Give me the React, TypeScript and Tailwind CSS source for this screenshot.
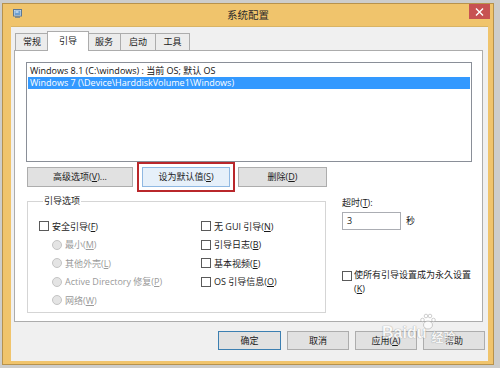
import React from "react";

const U = ({ children }: { children: React.ReactNode }) => (
  <span className="underline underline-offset-[1px]">{children}</span>
);

function Checkbox() {
  return <div className="w-[10px] h-[10px] border border-[#5a5a5a] bg-white shrink-0" />;
}

function Radio() {
  return <div className="w-[10px] h-[10px] rounded-full border border-[#c4c4c4] bg-[#e4e4e4] shrink-0" />;
}

function Tab({ children, className = "" }: { children: React.ReactNode; className?: string }) {
  return (
    <div
      className={`h-[17px] mb-[1px] border border-b-0 border-[#acacac] bg-[#ececec] flex items-center justify-center text-[9px] text-[#222] ${className}`}
    >
      {children}
    </div>
  );
}

function WindowIcon() {
  return (
    <svg width="9" height="9" viewBox="0 0 9 9">
      <rect x="0.5" y="0.5" width="8" height="6.5" fill="#dfe8f2" stroke="#5d7894" />
      <rect x="1.5" y="1.5" width="6" height="4.5" fill="#6d9fd0" />
      <rect x="2.5" y="2.5" width="3" height="1" fill="#fff" />
      <rect x="2" y="7.5" width="5" height="1.2" fill="#5d7894" />
    </svg>
  );
}

export default function App() {
  return (
    <div className="w-[500px] h-[368px] overflow-hidden bg-[#cdcdcb] pt-[3px] pl-[2px] font-['Open_Sans','Noto_Sans_CJK_SC',sans-serif] text-[9px] text-[#1a1a1a]">
      <div className="w-[492px] h-[362px] bg-[#f0c46c] border border-[#b7924c] flex flex-col">
        {/* title bar */}
        <div className="h-[22px] relative flex items-center justify-center shrink-0">
          <div className="absolute left-[10px] top-[5px]">
            <WindowIcon />
          </div>
          <span className="text-[10.5px] text-[#2b2b2b] font-['Noto_Sans_CJK_SC',sans-serif] -mt-[1px]">系统配置</span>
          <div className="absolute right-[3px] top-0 w-[21px] h-[15px] bg-[#c75252] flex items-center justify-center">
            <svg width="9" height="8" viewBox="0 0 9 8">
              <path d="M1 0.5 L8 7.5 M8 0.5 L1 7.5" stroke="#fff" strokeWidth="1.4" />
            </svg>
          </div>
        </div>

        {/* client area */}
        <div className="ml-[8px] mr-[5px] mb-[3px] h-[335px] bg-[#f0f0f0] border-t border-[#d9b464] flex flex-col relative">
          {/* tabs */}
          <div className="flex items-end h-[20px] mt-[4px] pl-[4px] -mb-[1px] relative z-10">
            <Tab className="w-[34px]">常规</Tab>
            <div className="-ml-[2px] w-[42px] h-[20px] border border-b-0 border-[#acacac] bg-white relative z-10 flex items-center justify-center text-[9px] text-[#222] pb-[2px]">
              引导
            </div>
            <Tab className="-ml-[2px] w-[34px]">服务</Tab>
            <Tab className="-ml-px w-[36px]">启动</Tab>
            <Tab className="-ml-px w-[35px]">工具</Tab>
          </div>

          {/* tab panel */}
          <div className="ml-[3px] w-[469px] h-[272px] border border-[#acacac] bg-white flex flex-col px-[11px] pt-[11px]">
            {/* list box */}
            <div className="w-[446px] h-[100px] border border-[#8a8f98] bg-white pt-[1px] px-[1px] shrink-0">
              <div className="h-[13px] leading-[13px] pl-[2px] whitespace-nowrap text-[#111]">
                Windows 8.1 (C:\windows) : 当前 OS; 默认 OS
              </div>
              <div className="h-[12px] leading-[12px] pl-[2px] whitespace-nowrap bg-[#3399ff] text-white">
                Windows 7 (\Device\HarddiskVolume1\Windows)
              </div>
            </div>

            {/* buttons row */}
            <div className="flex items-center h-[30px] shrink-0">
              <div className="ml-[1px] w-[106px] h-[20px] border border-[#adadad] bg-[#e1e1e1] flex items-center justify-center">
                高级选项(<U>V</U>)...
              </div>
              <div className="ml-[4px] w-[98px] h-[30px] border-2 border-[#b9272b] p-[3px]">
                <div className="w-full h-full border border-[#8fb8e2] bg-[#e6f0fa] flex items-center justify-center">
                  设为默认值(<U>S</U>)
                </div>
              </div>
              <div className="ml-[3px] w-[89px] h-[20px] border border-[#adadad] bg-[#e1e1e1] flex items-center justify-center">
                删除(<U>D</U>)
              </div>
            </div>

            {/* lower section */}
            <div className="flex mt-[3px]">
              <fieldset className="ml-[1px] w-[300px] h-[118px] border border-[#d5d5d5] px-[11px] pt-[10px]">
                <legend className="ml-[4px] px-[1px] leading-[12px] text-[#222]">引导选项</legend>
                <div className="flex">
                  <div className="w-[162px] flex flex-col">
                    <div className="h-[18.5px] flex items-center gap-[3px]">
                      <Checkbox />
                      <span>安全引导(<U>F</U>)</span>
                    </div>
                    <div className="h-[18.5px] flex items-center gap-[3px] pl-[13px] text-[#9a9a9a]">
                      <Radio />
                      <span>最小(<U>M</U>)</span>
                    </div>
                    <div className="h-[18.5px] flex items-center gap-[3px] pl-[13px] text-[#9a9a9a]">
                      <Radio />
                      <span>其他外壳(<U>L</U>)</span>
                    </div>
                    <div className="h-[18.5px] flex items-center gap-[3px] pl-[13px] text-[#9a9a9a] whitespace-nowrap">
                      <Radio />
                      <span>Active Directory 修复(<U>P</U>)</span>
                    </div>
                    <div className="h-[18.5px] flex items-center gap-[3px] pl-[13px] text-[#9a9a9a]">
                      <Radio />
                      <span>网络(<U>W</U>)</span>
                    </div>
                  </div>
                  <div className="flex flex-col">
                    <div className="h-[18.5px] flex items-center gap-[3px] whitespace-nowrap">
                      <Checkbox />
                      <span>无 GUI 引导(<U>N</U>)</span>
                    </div>
                    <div className="h-[18.5px] flex items-center gap-[3px]">
                      <Checkbox />
                      <span>引导日志(<U>B</U>)</span>
                    </div>
                    <div className="h-[18.5px] flex items-center gap-[3px]">
                      <Checkbox />
                      <span>基本视频(<U>E</U>)</span>
                    </div>
                    <div className="h-[18.5px] flex items-center gap-[3px] whitespace-nowrap">
                      <Checkbox />
                      <span>OS 引导信息(<U>O</U>)</span>
                    </div>
                  </div>
                </div>
              </fieldset>

              <div className="ml-[16px] flex flex-col pt-[2px]">
                <div className="leading-[12px]">超时(<U>T</U>):</div>
                <div className="flex items-center mt-[3px]">
                  <div className="w-[59px] h-[18px] border border-[#abadb3] bg-white pl-[4px] flex items-center">3</div>
                  <span className="ml-[5px]">秒</span>
                </div>
                <div className="flex items-start gap-[2px] mt-[40px]">
                  <div className="mt-[1px]">
                    <Checkbox />
                  </div>
                  <div className="leading-[14px] -mt-[2px] whitespace-nowrap">
                    使所有引导设置成为永久设置
                    <br />
                    (<U>K</U>)
                  </div>
                </div>
              </div>
            </div>
          </div>

          {/* bottom buttons */}
          <div className="flex justify-end gap-[6px] mt-[9px] pr-[3px]">
            <div className="w-[63px] h-[19px] border border-[#3c7fb1] bg-[#e1e1e1] flex items-center justify-center">确定</div>
            <div className="w-[62px] h-[19px] border border-[#adadad] bg-[#e1e1e1] flex items-center justify-center">取消</div>
            <div className="w-[62px] h-[19px] border border-[#adadad] bg-[#e1e1e1] flex items-center justify-center">
              应用(<U>A</U>)
            </div>
            <div className="w-[62px] h-[19px] border border-[#adadad] bg-[#e1e1e1] flex items-center justify-center">帮助</div>
          </div>

          {/* watermark */}
          <div className="absolute left-[371px] top-[286px] w-[95px] h-[32px] pointer-events-none opacity-70">
            <svg className="absolute left-[37px] top-0" width="18" height="17" viewBox="0 0 18 17">
              <g fill="#fff" stroke="#a8a8a8" strokeWidth="0.8">
                <ellipse cx="9" cy="12" rx="4.5" ry="4" />
                <circle cx="3.5" cy="7" r="1.8" />
                <circle cx="7" cy="3" r="1.8" />
                <circle cx="11" cy="3" r="1.8" />
                <circle cx="14.5" cy="7" r="1.8" />
              </g>
            </svg>
            <div className="absolute left-0 top-[12px] flex items-end text-white [text-shadow:0_0_1px_#888,0_0_1px_#888]">
              <span className="text-[16px] leading-[16px] font-bold font-['Liberation_Sans',sans-serif]">Baidu</span>
              <span className="text-[12px] leading-[14px] font-bold font-['Noto_Sans_CJK_SC',sans-serif] ml-[5px] -mb-[3px]">经验</span>
            </div>
          </div>
        </div>
      </div>
    </div>
  );
}
